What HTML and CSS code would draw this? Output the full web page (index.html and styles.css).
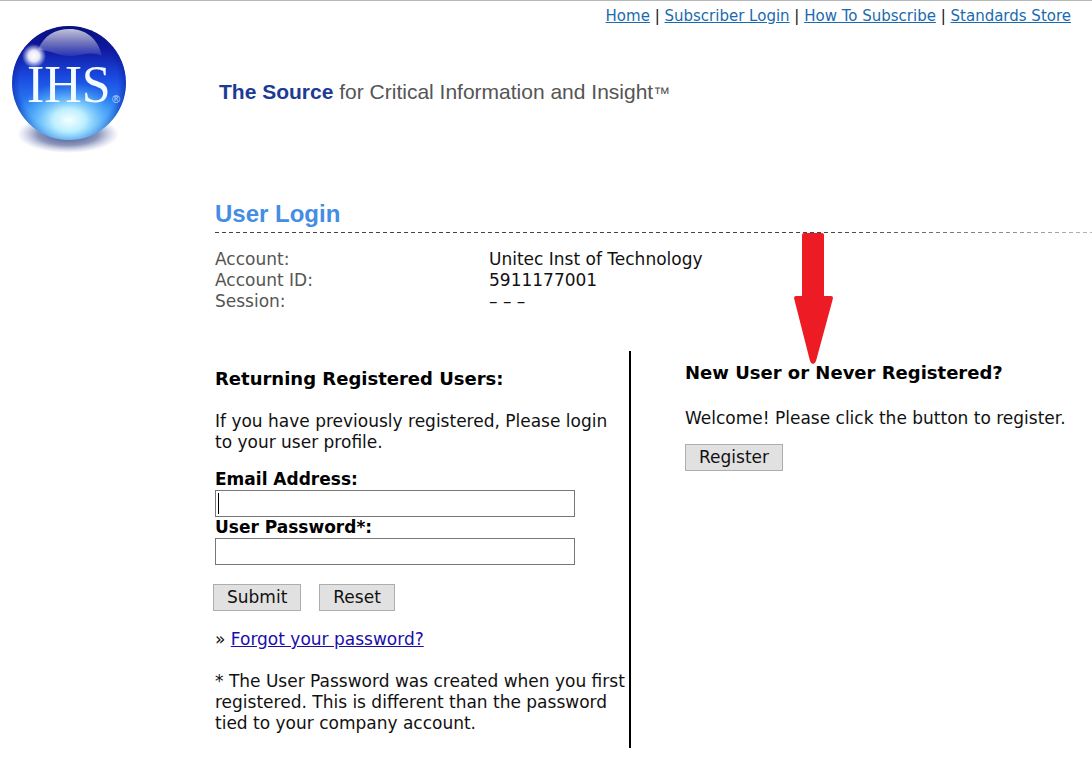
FILE: index.html
```html
<!DOCTYPE html>
<html lang="en">
<head>
<meta charset="utf-8">
<title>User Login</title>
<link rel="stylesheet" href="styles.css">
</head>
<body>
<header class="header">
  <svg class="logo" viewBox="0 0 140 140" role="img" aria-label="IHS">
    <defs>
      <linearGradient id="ball" x1="0" y1="0" x2="0" y2="1">
        <stop offset="0" stop-color="#07076a"/>
        <stop offset=".2" stop-color="#1018a0"/>
        <stop offset=".45" stop-color="#1a4ae0"/>
        <stop offset=".7" stop-color="#2c80f4"/>
        <stop offset="1" stop-color="#46a4fa"/>
      </linearGradient>
      <radialGradient id="rim">
        <stop offset=".86" stop-color="#0a1c9c" stop-opacity="0"/>
        <stop offset="1" stop-color="#0a1c9c" stop-opacity=".5"/>
      </radialGradient>
      <radialGradient id="glow">
        <stop offset="0" stop-color="#f4ffff"/>
        <stop offset=".3" stop-color="#c4f4ff" stop-opacity=".95"/>
        <stop offset=".6" stop-color="#80d4ff" stop-opacity=".6"/>
        <stop offset="1" stop-color="#46b4ff" stop-opacity="0"/>
      </radialGradient>
      <linearGradient id="gloss" x1="0" y1="0" x2="0" y2="1">
        <stop offset="0" stop-color="#fff" stop-opacity=".75"/>
        <stop offset="1" stop-color="#fff" stop-opacity=".08"/>
      </linearGradient>
      <radialGradient id="spark">
        <stop offset="0" stop-color="#fff"/>
        <stop offset=".45" stop-color="#fff" stop-opacity=".9"/>
        <stop offset="1" stop-color="#fff" stop-opacity="0"/>
      </radialGradient>
      <radialGradient id="shade">
        <stop offset="0" stop-color="#20306c" stop-opacity=".9"/>
        <stop offset=".6" stop-color="#405090" stop-opacity=".6"/>
        <stop offset="1" stop-color="#8090c0" stop-opacity="0"/>
      </radialGradient>
      <clipPath id="disc"><circle cx="69" cy="63" r="57"/></clipPath>
    </defs>
    <ellipse cx="68" cy="114" rx="51" ry="19" fill="url(#shade)"/>
    <circle cx="69" cy="63" r="57" fill="url(#ball)"/>
    <g clip-path="url(#disc)">
      <circle cx="69" cy="63" r="57" fill="url(#rim)"/>
      <ellipse cx="69" cy="100" rx="54" ry="38" fill="url(#glow)"/>
      <path d="M38 30C44 15 55 9 70 9s28 9 32 27c-10-5-18-1-30 0s-20-6-34-6z" fill="url(#gloss)"/>
    </g>
    <circle cx="34" cy="36" r="12" fill="url(#spark)"/>
    <text class="logo-letters" x="27" y="82">IHS</text>
    <text class="logo-mark" x="112" y="83">®</text>
  </svg>
  <p class="tagline"><strong>The Source</strong> for Critical Information and Insight<span class="trademark">™</span></p>
  <nav class="nav">
    <a href="#">Home</a> | <a href="#">Subscriber Login</a> | <a href="#">How To Subscribe</a> | <a href="#">Standards Store</a>
  </nav>
</header>

<main class="main">
  <h1 class="title">User Login</h1>
  <div class="rule">
    <svg class="arrow" viewBox="0 0 40 132" aria-hidden="true">
      <path d="M11 1h18q2 0 2 2v61h7q2 0 2 2l-1 4-16 59q-1 3-3 3t-3-3L2 70l-1-4q0-2 2-2h6V3q0-2 2-2z"/>
    </svg>
  </div>

  <dl class="account">
    <dt>Account:</dt><dd>Unitec Inst of Technology</dd>
    <dt>Account ID:</dt><dd>5911177001</dd>
    <dt>Session:</dt><dd>– – –</dd>
  </dl>

  <div class="columns">
    <section class="returning">
      <h2>Returning Registered Users:</h2>
      <p class="intro">If you have previously registered, Please login to your user profile.</p>
      <form class="form">
        <label for="email">Email Address:</label>
        <input class="field field-active" id="email" type="text">
        <label for="password">User Password*:</label>
        <input class="field" id="password" type="password">
        <div class="actions">
          <button class="button" type="submit">Submit</button>
          <button class="button" type="reset">Reset</button>
        </div>
      </form>
      <p class="forgot">» <a href="#">Forgot your password?</a></p>
      <p class="note">* The User Password was created when you first registered. This is different than the password tied to your company account.</p>
    </section>
    <section class="register">
      <h2>New User or Never Registered?</h2>
      <p>Welcome! Please click the button to register.</p>
      <button class="button" type="button">Register</button>
    </section>
  </div>
</main>
</body>
</html>
```
FILE: styles.css
```css
* { box-sizing: border-box; }

body {
  margin: 0;
  border-top: 1px solid #b8b8b8;
  background: #fff;
  color: #111;
  font: 17px/21px Verdana, "DejaVu Sans", sans-serif;
}

h1, h2, p, dl, dd { margin: 0; }

.header {
  display: grid;
  grid-template-columns: 219px 1fr;
  grid-template-rows: 19px 1fr;
  padding-top: 5px;
  height: 189px;
}

.nav {
  grid-area: 1 / 1 / 2 / 3;
  padding-right: 21px;
  text-align: right;
  font-size: 15px;
}

.nav a { color: #1a6ab0; }

.logo {
  grid-area: 2 / 1;
  width: 140px;
  height: 140px;
  margin-top: -5px;
}

.logo-letters {
  fill: #f2fbff;
  font: 52px "Liberation Serif", serif;
}

.logo-mark {
  fill: #c4dcff;
  font: 11px "Liberation Sans", sans-serif;
}

.tagline {
  grid-area: 2 / 2;
  padding-top: 56px;
  color: #555;
  font: 21px/22px "Liberation Sans", Arial, sans-serif;
}

.tagline strong { color: #1c3c94; }

.trademark { font-size: 17px; }

.main { padding-left: 215px; }

.title {
  padding-top: 10px;
  color: #448de4;
  font: bold 24px/28px "Liberation Sans", Arial, sans-serif;
}

.rule {
  position: relative;
  height: 1px;
  margin-top: 4px;
  background:
    linear-gradient(90deg, transparent 70%, rgba(255, 255, 255, .6)),
    repeating-linear-gradient(90deg, #444 0 4px, #fff 4px 7px);
}

.arrow {
  position: absolute;
  top: 0;
  left: 578px;
  width: 40px;
  height: 132px;
  fill: #ed1c24;
}

.account {
  display: grid;
  grid-template-columns: 274px 1fr;
  margin-top: 16px;
}

.account dt { color: #555; }

.columns {
  display: grid;
  grid-template-columns: 416px 1fr;
  margin-top: 39px;
}

.columns h2 {
  font-size: 18px;
  line-height: 21px;
  color: #000;
}

.returning {
  padding: 17px 0 14px;
  border-right: 2px solid #000;
}

.intro { margin: 22px 0 16px; }

.form label {
  display: block;
  color: #000;
  font-weight: bold;
}

.field {
  display: block;
  width: 360px;
  height: 27px;
  padding: 2px 4px;
  border: 1px solid #777;
  background: #fff;
  font: inherit;
}

.field-active {
  background: linear-gradient(#000, #000) 2px 2px / 1px 21px no-repeat #fff;
}

.actions {
  display: flex;
  gap: 18px;
  margin: 19px 0 18px -2px;
}

.button {
  height: 27px;
  padding: 0 13px;
  border: 1px solid #adadad;
  background: #e1e1e1;
  color: #111;
  font: inherit;
}

.forgot a { color: #1a0dab; }

.note { margin-top: 21px; }

.register { padding: 11px 0 0 54px; }

.register p { margin: 25px 0 15px; }
```
